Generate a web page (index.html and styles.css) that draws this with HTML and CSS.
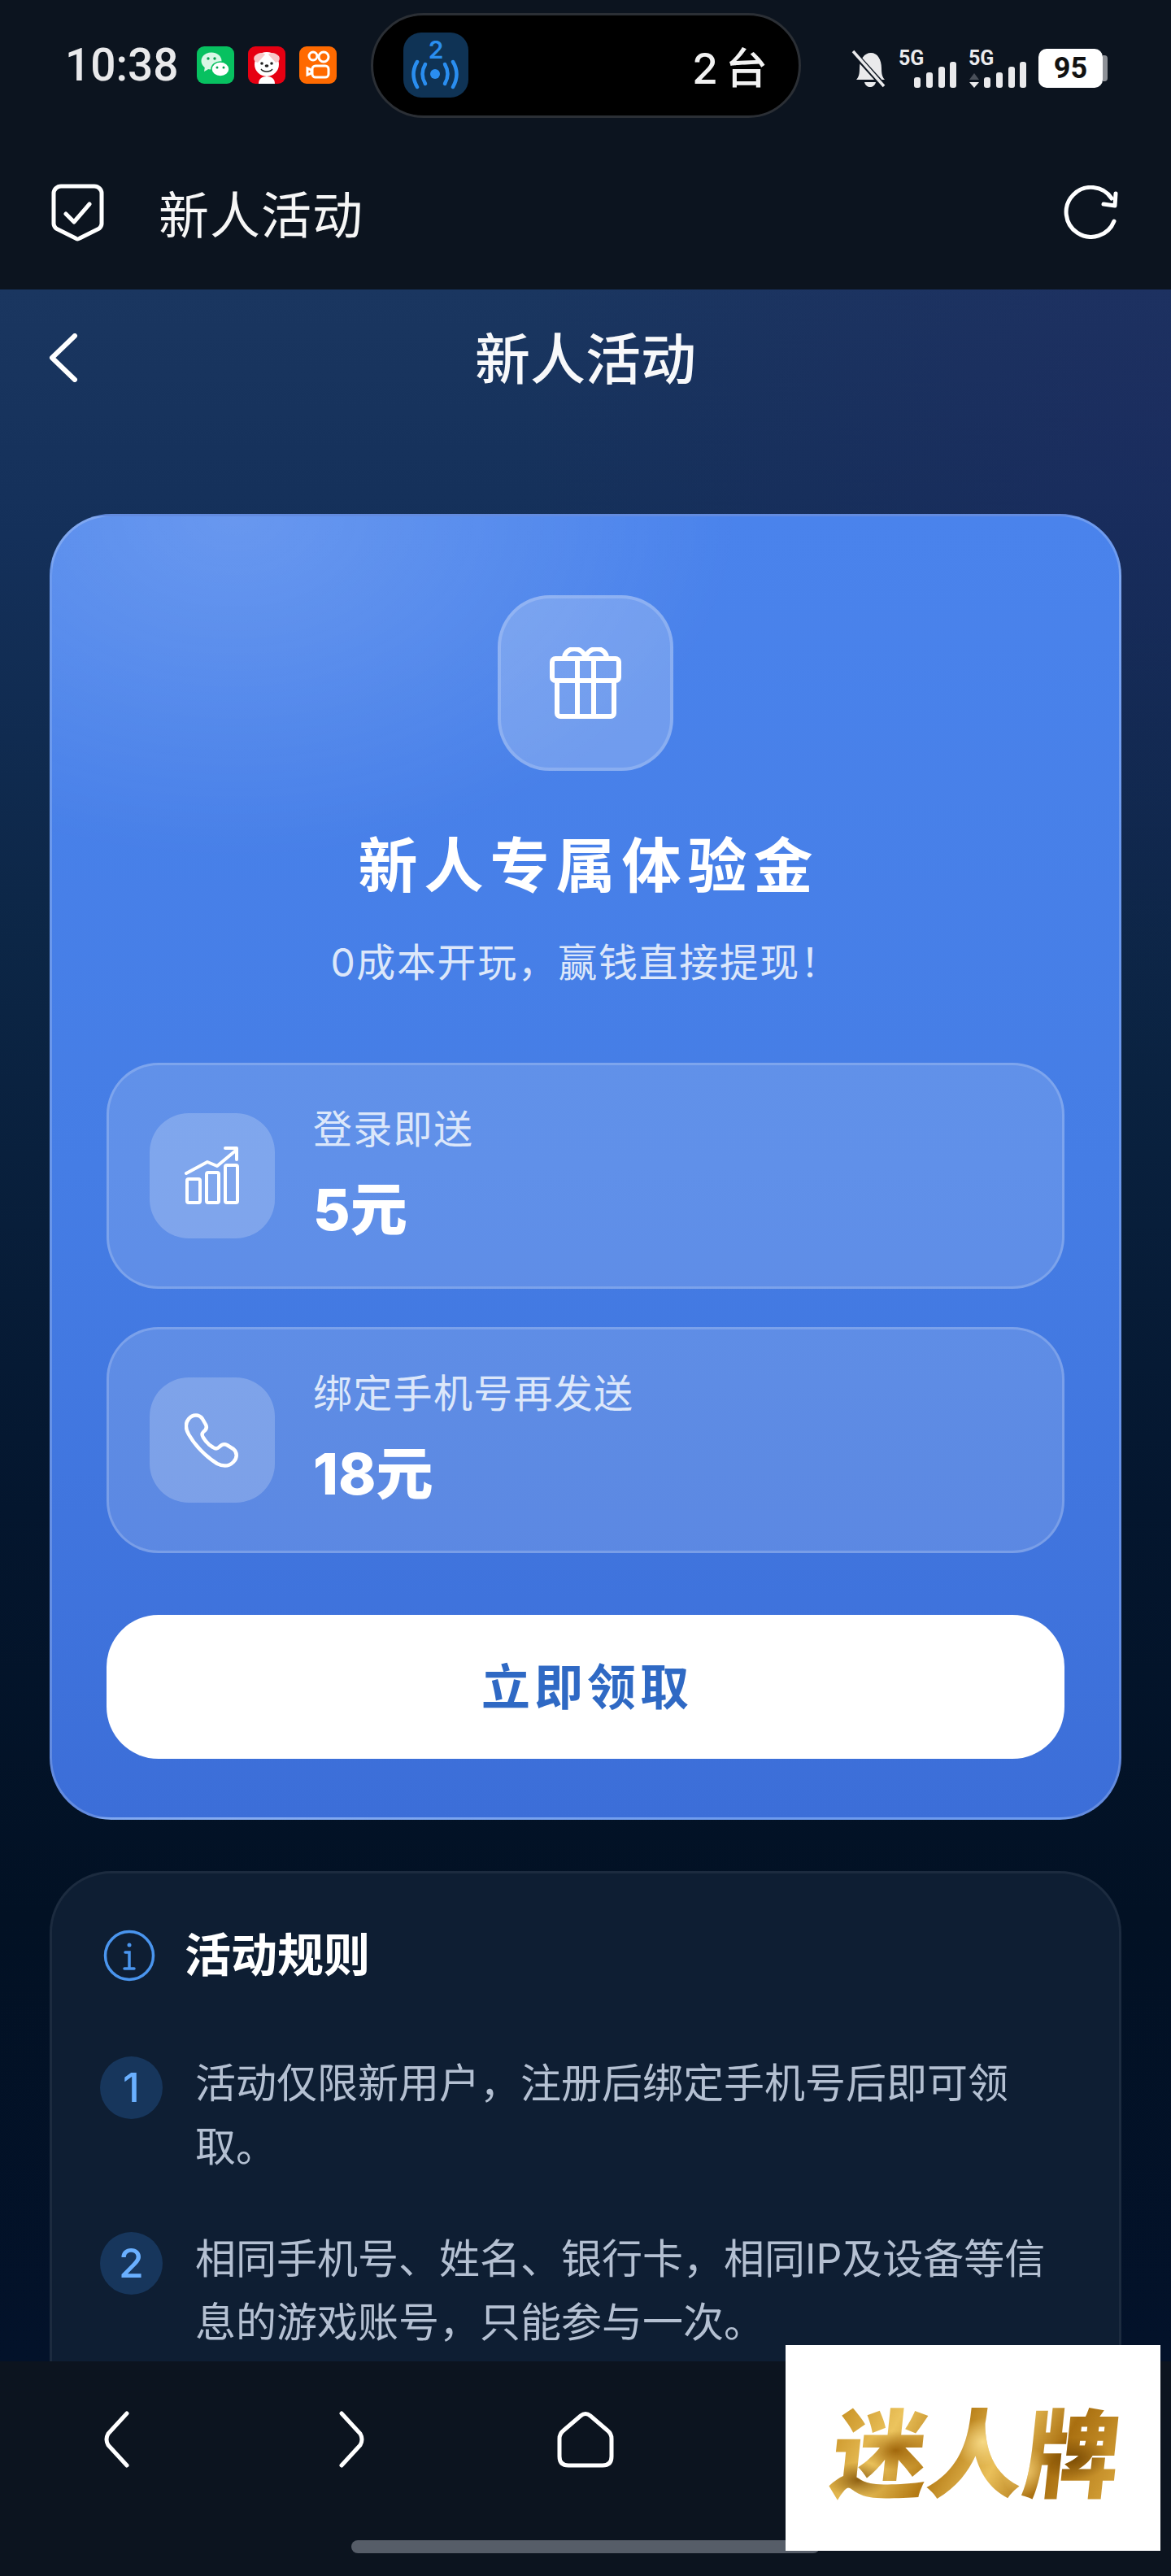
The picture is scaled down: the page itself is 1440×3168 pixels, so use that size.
FILE: index.html
```html
<!DOCTYPE html>
<html lang="zh-CN">
<head>
  <meta charset="UTF-8" />
  <meta name="viewport" content="width=device-width, initial-scale=1" />
  <title>新人活动</title>
  <link rel="stylesheet" href="styles.css">
</head>
<body>
<div class="phone">

  <!-- 状态栏 -->
  <div class="status-bar">
    <div class="status-left">
      <span class="clock">10:38</span>
      <svg class="app-icon" viewBox="0 0 46 46">
        <rect width="46" height="46" rx="9" fill="#07c160"/>
        <ellipse cx="18" cy="18" rx="12.5" ry="10.5" fill="#d9f7e6"/>
        <path d="M10 25l-1 6 7-4z" fill="#d9f7e6"/>
        <ellipse cx="29" cy="28" rx="11" ry="9" fill="#fff" stroke="#07c160" stroke-width="1.5"/>
        <circle cx="14" cy="15" r="1.7" fill="#07a050"/><circle cx="22" cy="15" r="1.7" fill="#07a050"/>
        <circle cx="25" cy="26" r="1.5" fill="#07a050"/><circle cx="33" cy="26" r="1.5" fill="#07a050"/>
      </svg>
      <svg class="app-icon" viewBox="0 0 46 46">
        <rect width="46" height="46" rx="9" fill="#e60012"/>
        <path d="M13 46c0-6 4-9 10-9s10 3 10 9z" fill="#fff"/>
        <ellipse cx="23" cy="22" rx="15" ry="15" fill="#fff"/>
        <path d="M8 12c5-5 10-5 13-2l-9 10c-4-1-6-4-4-8zM38 12c-5-5-10-5-13-2l9 10c4-1 6-4 4-8z" fill="#f7c9c9"/>
        <circle cx="17" cy="21" r="1.8" fill="#222"/><circle cx="29" cy="21" r="1.8" fill="#222"/>
        <ellipse cx="23" cy="24" rx="2.4" ry="1.8" fill="#222"/>
        <path d="M16 28c3 4 11 4 14 0" fill="none" stroke="#222" stroke-width="1.3"/>
      </svg>
      <svg class="app-icon" viewBox="0 0 46 46">
        <rect width="46" height="46" rx="9" fill="#ff6a00"/>
        <g fill="none" stroke="#fff" stroke-width="3">
          <circle cx="17" cy="12" r="5"/>
          <circle cx="30" cy="13" r="6"/>
          <rect x="16" y="24" width="20" height="14" rx="4"/>
          <path d="M10 27l5 2v4l-5 2z"/>
        </g>
      </svg>
    </div>

    <div class="island">
      <svg class="island-icon" viewBox="0 0 80 80">
        <rect width="80" height="80" rx="22" fill="#0f3355"/>
        <text x="40" y="32" text-anchor="middle" class="island-num">2</text>
        <circle cx="39" cy="51" r="6" fill="#2a8ef0"/>
        <g fill="none" stroke="#2a8ef0" stroke-width="4.500" stroke-linecap="round">
          <path d="M27 39q-7 12 0 24M51 39q7 12 0 24"/>
          <path d="M17 36q-9 15 0 31M61 36q9 15 0 31"/>
        </g>
      </svg>
      <span class="island-text">2 台</span>
    </div>

    <div class="status-right">
      <svg class="bell" viewBox="0 0 44 48">
        <path d="M6 38c3-3 4-7 4-14 0-11 6-19 14-19s13 8 13 19c0 7 1 11 4 14z" fill="#eaeaec"/>
        <path d="M16 41h14c-1 4-4 6-7 6s-6-2-7-6z" fill="#eaeaec"/>
        <path d="M2 4l38 42" stroke="#0c141f" stroke-width="7"/>
        <path d="M2 3l38 43" stroke="#eaeaec" stroke-width="3.5"/>
      </svg>
      <svg class="sim" viewBox="0 -8 72 56">
        <text x="0" y="20" class="sim-label">5G</text>
        <rect x="19" y="35" width="8" height="13" rx="3" fill="#eaeaec"/>
        <rect x="34" y="29" width="8" height="19" rx="3" fill="#eaeaec"/>
        <rect x="49" y="22" width="8" height="26" rx="3" fill="#eaeaec"/>
        <rect x="63" y="16" width="8" height="32" rx="3" fill="#eaeaec"/>
      </svg>
      <svg class="sim" viewBox="0 -8 72 56">
        <text x="0" y="20" class="sim-label">5G</text>
        <path d="M1 38l6-8 6 8z" fill="#4a505a"/>
        <path d="M1 41h12l-6 7z" fill="#eaeaec"/>
        <rect x="19" y="35" width="8" height="13" rx="3" fill="#eaeaec"/>
        <rect x="34" y="29" width="8" height="19" rx="3" fill="#eaeaec"/>
        <rect x="49" y="22" width="8" height="26" rx="3" fill="#eaeaec"/>
        <rect x="63" y="16" width="8" height="32" rx="3" fill="#eaeaec"/>
      </svg>
      <div class="battery">95</div>
    </div>
  </div>

  <!-- 标题栏 -->
  <div class="app-bar">
    <svg class="shield" viewBox="0 0 65 71" fill="none" stroke="#fff" stroke-width="5" stroke-linejoin="round" stroke-linecap="round">
      <path d="M12 3h41a9 9 0 0 1 9 9v37c0 3-1 4-3 6L35 67q-3 2-5 0L6 55c-2-2-3-3-3-6V12a9 9 0 0 1 9-9z"/>
      <path d="M18 37l10 10 19-22"/>
    </svg>
    <span class="app-title">新人活动</span>
    <svg class="refresh" viewBox="0 0 67 66" fill="none" stroke="#fff" stroke-width="5" stroke-linecap="round" stroke-linejoin="round">
      <path d="M62 44A30.500 30.500 0 1 1 59 16"/>
      <path d="M64 10l-1 15-14-2"/>
    </svg>
  </div>

  <!-- 页面内容 -->
  <div class="webview">
    <div class="page-head">
      <svg class="page-back" viewBox="0 0 36 60" fill="none" stroke="#fff" stroke-width="6" stroke-linecap="round" stroke-linejoin="round">
        <path d="M32 3L4 30l28 27"/>
      </svg>
      <h1>新人活动</h1>
    </div>

    <div class="promo-card">
      <div class="gift-box">
        <svg width="88" height="88" viewBox="0 0 88 88" fill="none" stroke="#fff" stroke-width="6" stroke-linejoin="round" stroke-linecap="round">
          <rect x="3" y="14" width="82" height="27" rx="4"/>
          <path d="M9 41v40a4 4 0 0 0 4 4h62a4 4 0 0 0 4-4V41"/>
          <path d="M34 14v71M54 14v71"/>
          <path d="M18 14c0-16 24-16 26 0 2-16 26-16 26 0"/>
        </svg>
      </div>
      <h2 class="promo-title">新人专属体验金</h2>
      <p class="promo-sub">0成本开玩，赢钱直接提现！</p>

      <div class="bonus-list">
        <div class="bonus-row">
          <div class="bonus-icon">
            <svg width="68" height="72" viewBox="0 0 68 72" fill="none" stroke="#fff" stroke-width="4" stroke-linejoin="round" stroke-linecap="round">
              <path d="M2 33l26-14 12 5 24-20"/>
              <path d="M50 2h14v14"/>
              <rect x="3" y="40" width="16" height="29" rx="2"/>
              <rect x="27" y="32" width="15" height="37" rx="2"/>
              <rect x="50" y="23" width="15" height="46" rx="2"/>
            </svg>
          </div>
          <div class="bonus-text">
            <span class="bonus-label">登录即送</span>
            <span class="bonus-value">5元</span>
          </div>
        </div>
        <div class="bonus-row">
          <div class="bonus-icon">
            <svg width="68" height="68" viewBox="0 0 68 68" fill="none" stroke="#fff" stroke-width="4.500" stroke-linejoin="round" stroke-linecap="round">
              <path d="M5 8c5-6 13-6 17 0l4 7c2 4 0 7-3 9-2 2-2 4 0 7 3 5 7 9 12 12 3 2 5 2 7 0 3-3 6-5 10-3l8 5c5 4 5 11 0 16-5 5-12 6-20 2C27 55 13 41 5 27 1 20 1 13 5 8z"/>
            </svg>
          </div>
          <div class="bonus-text">
            <span class="bonus-label">绑定手机号再发送</span>
            <span class="bonus-value">18元</span>
          </div>
        </div>
      </div>

      <button class="claim-btn">立即领取</button>
    </div>

    <div class="rules-card">
      <div class="rules-head">
        <svg width="64" height="64" viewBox="0 0 64 64" fill="none" stroke="#4a95ee" stroke-width="3.500" stroke-linecap="round">
          <circle cx="32" cy="32" r="29.500"/>
          <circle cx="32" cy="19" r="2.500" fill="#4a95ee" stroke="none"/>
          <path d="M27 28h5v20M26 48h12"/>
        </svg>
        <h3>活动规则</h3>
      </div>
      <div class="rule-item">
        <span class="rule-num">1</span>
        <p>活动仅限新用户，注册后绑定手机号后即可领取。</p>
      </div>
      <div class="rule-item">
        <span class="rule-num">2</span>
        <p>相同手机号、姓名、银行卡，相同IP及设备等信息的游戏账号，只能参与一次。</p>
      </div>
    </div>
  </div>

  <!-- 底部导航 -->
  <div class="bottom-nav">
    <div class="nav-icons">
      <svg width="32" height="70" viewBox="0 0 32 70" fill="none" stroke="#fff" stroke-width="5" stroke-linecap="round" stroke-linejoin="round">
        <path d="M29 3L6 28q-4 7 0 14l23 25"/>
      </svg>
      <svg width="32" height="70" viewBox="0 0 32 70" fill="none" stroke="#fff" stroke-width="5" stroke-linecap="round" stroke-linejoin="round">
        <path d="M3 3l23 25q4 7 0 14L3 67"/>
      </svg>
      <svg width="70" height="70" viewBox="0 0 70 70" fill="none" stroke="#fff" stroke-width="5" stroke-linejoin="round">
        <path d="M29 6q6-5 12 0l21 18q5 4 5 10v22q0 11-11 11H14Q3 67 3 56V34q0-6 5-10z"/>
      </svg>
    </div>
    <div class="home-bar"></div>
  </div>

  <div class="watermark"><span>迷人牌</span></div>
</div>
</body>
</html>
```

FILE: styles.css
```css
* { box-sizing: border-box; }
html, body { margin: 0; padding: 0; }
body {
  background: #0c141f;
  font-family: Inter, "Noto Sans CJK SC", sans-serif;
  color: #fff;
}
h1, h2, h3, p { margin: 0; }

.phone {
  position: relative;
  width: 1440px;
  height: 3168px;
  display: flex;
  flex-direction: column;
  overflow: hidden;
  background: #0c141f;
}

/* status bar */
.status-bar {
  height: 160px;
  flex: none;
  display: flex;
  align-items: center;
}
.status-left {
  width: 456px;
  padding-left: 80px;
  display: flex;
  align-items: center;
  gap: 17px;
}
.clock {
  font-family: Roboto, sans-serif;
  font-size: 55px;
  font-weight: 500;
  color: #e9e9eb;
  margin-right: 6px;
  width: 139px;
}
.app-icon { width: 46px; height: 46px; }
.island {
  width: 529px;
  height: 129px;
  background: #000;
  border: 3px solid #2b2f35;
  border-radius: 65px;
  display: flex;
  align-items: center;
  justify-content: space-between;
  padding: 0 38px 0 37px;
}
.island-icon { width: 80px; height: 80px; }
.island-num {
  font-family: Inter, sans-serif;
  font-size: 30px;
  font-weight: 600;
  fill: #2a8ef0;
}
.island-text {
  font-size: 52px;
  font-weight: 500;
  color: #f2f2f2;
  word-spacing: -5px;
}
.status-right {
  margin-left: 62px;
  height: 56px;
  display: flex;
  align-items: flex-end;
  gap: 14px;
}
.bell { width: 44px; height: 48px; }
.sim { width: 72px; height: 56px; }
.sim-label {
  font-family: Roboto, sans-serif;
  font-size: 25px;
  font-weight: 700;
  fill: #eaeaec;
}
.battery {
  position: relative;
  width: 79px;
  height: 48px;
  background: #fff;
  border-radius: 10px;
  color: #111;
  font-size: 36px;
  font-weight: 700;
  line-height: 48px;
  text-align: center;
  font-family: Roboto, sans-serif;
}
.battery::after {
  content: "";
  position: absolute;
  right: -6px;
  top: 8px;
  width: 6px;
  height: 32px;
  background: #8e9197;
  border-radius: 0 4px 4px 0;
}

/* app bar */
.app-bar {
  height: 196px;
  flex: none;
  display: flex;
  align-items: center;
  padding: 6px 65px 0 63px;
}
.shield { width: 65px; height: 71px; }
.app-title {
  margin-left: 67px;
  font-size: 62px;
  letter-spacing: 1px;
  color: #f6f6f6;
  flex: 1;
}
.refresh { width: 67px; height: 66px; }

/* webview */
.webview {
  flex: 1;
  min-height: 0;
  overflow: hidden;
  padding: 0 61px;
  background:
    radial-gradient(800px 800px at 100% 150px, rgba(40, 30, 100, .26), rgba(40, 30, 100, 0)),
    linear-gradient(180deg, #1a3660 0, #14305a 300px, #0c2646 800px, #04162e 1500px, #021124 2000px, #03122a 100%);
}
.page-head {
  position: relative;
  height: 168px;
  display: flex;
  align-items: center;
  justify-content: center;
  padding-bottom: 6px;
}
.page-back {
  position: absolute;
  left: -1px;
  top: 54px;
  width: 36px;
  height: 60px;
}
.page-head h1 {
  font-size: 68px;
  font-weight: 500;
  color: #f7f8fa;
}

/* promo card */
.promo-card {
  margin-top: 108px;
  height: 1606px;
  padding: 97px 67px 0;
  border: 3px solid rgba(255, 255, 255, .2);
  border-radius: 76px;
  background:
    radial-gradient(620px 420px at 17% 0, rgba(255, 255, 255, .17), rgba(255, 255, 255, 0)),
    linear-gradient(180deg, #4a83ec 0, #457de5 800px, #3c6ed8 100%);
  text-align: center;
}
.gift-box {
  width: 216px;
  height: 216px;
  margin: 0 auto;
  display: flex;
  align-items: center;
  justify-content: center;
  background: rgba(255, 255, 255, .22);
  border: 4px solid rgba(255, 255, 255, .18);
  border-radius: 64px;
}
.promo-title {
  margin-top: 67px;
  padding-left: 8px;
  font-size: 73px;
  line-height: 100px;
  font-weight: 700;
  letter-spacing: 8px;
}
.promo-sub {
  margin-top: 34px;
  font-size: 48px;
  line-height: 70px;
  letter-spacing: 1.600px;
  color: #dce7fa;
}
.bonus-list {
  margin-top: 88px;
  display: flex;
  flex-direction: column;
  gap: 47px;
}
.bonus-row {
  height: 278px;
  padding-left: 50px;
  display: flex;
  align-items: center;
  gap: 47px;
  border: 3px solid rgba(255, 255, 255, .18);
  border-radius: 64px;
  background: rgba(255, 255, 255, .15);
  text-align: left;
}
.bonus-icon {
  width: 154px;
  height: 154px;
  display: flex;
  align-items: center;
  justify-content: center;
  background: rgba(255, 255, 255, .2);
  border-radius: 48px;
}
.bonus-text {
  display: flex;
  flex-direction: column;
  gap: 24px;
}
.bonus-label {
  font-size: 48px;
  line-height: 60px;
  letter-spacing: 1.300px;
  color: #dce7fa;
}
.bonus-value {
  font-size: 70px;
  line-height: 90px;
  font-weight: 800;
}
.claim-btn {
  display: block;
  width: 100%;
  height: 177px;
  margin-top: 76px;
  padding: 0 0 8px 4px;
  border: 0;
  border-radius: 64px;
  background: #fff;
  color: #2f69c4;
  font-family: inherit;
  font-size: 60px;
  font-weight: 700;
  letter-spacing: 5px;
}

/* rules */
.rules-card {
  margin-top: 63px;
  height: 900px;
  padding: 69px 90px 0 59px;
  border: 3px solid rgba(255, 255, 255, .06);
  border-radius: 76px;
  background: #0e1e33;
}
.rules-head {
  display: flex;
  align-items: center;
  gap: 36px;
  margin-left: 4px;
  height: 64px;
}
.rules-head h3 {
  font-size: 57px;
  line-height: 58px;
  font-weight: 700;
}
.rule-item {
  display: flex;
  gap: 40px;
  margin-top: 86px;
}
.rule-item + .rule-item { margin-top: 60px; }
.rule-num {
  flex: none;
  width: 77px;
  height: 77px;
  margin-top: 6px;
  border-radius: 50%;
  background: #17365c;
  color: #6ab0ff;
  font-size: 50px;
  font-weight: 500;
  line-height: 77px;
  text-align: center;
}
.rule-item p {
  font-size: 50px;
  line-height: 78px;
  color: #b4c0d2;
}

/* bottom nav */
.bottom-nav {
  position: relative;
  height: 264px;
  flex: none;
  background: #0c141f;
}
.nav-icons {
  display: flex;
  align-items: center;
  padding: 61px 0 0 127px;
}
.nav-icons svg:nth-child(2) { margin-left: 258px; }
.nav-icons svg:nth-child(3) { margin-left: 236px; }
.home-bar {
  width: 576px;
  height: 16px;
  margin: 89px auto 0;
  border-radius: 8px;
  background: #565d68;
}

/* watermark, sits over the nav */
.watermark {
  position: absolute;
  left: 966px;
  top: 2884px;
  width: 461px;
  height: 253px;
  display: flex;
  align-items: center;
  justify-content: center;
  padding-left: 10px;
  background: #fff;
}
.watermark span {
  font-family: "Noto Sans CJK SC", sans-serif;
  font-size: 118px;
  line-height: 130px;
  font-weight: 900;
  transform: skewX(-6deg);
  background:
    radial-gradient(40px 24px at 22% 52%, rgba(150, 90, 0, .85), rgba(150, 90, 0, 0)),
    radial-gradient(34px 30px at 52% 44%, rgba(255, 230, 150, .8), rgba(255, 230, 150, 0)),
    radial-gradient(44px 26px at 84% 60%, rgba(110, 65, 0, .8), rgba(110, 65, 0, 0)),
    radial-gradient(30px 30px at 68% 72%, rgba(255, 220, 130, .7), rgba(255, 220, 130, 0)),
    radial-gradient(36px 22px at 10% 80%, rgba(120, 72, 0, .8), rgba(120, 72, 0, 0)),
    linear-gradient(115deg, #c38a1c, #ecc45e 22%, #b47a14 40%, #eac05a 58%, #a96f10 75%, #d9a63c);
  -webkit-background-clip: text;
  background-clip: text;
  color: transparent;
}
```
